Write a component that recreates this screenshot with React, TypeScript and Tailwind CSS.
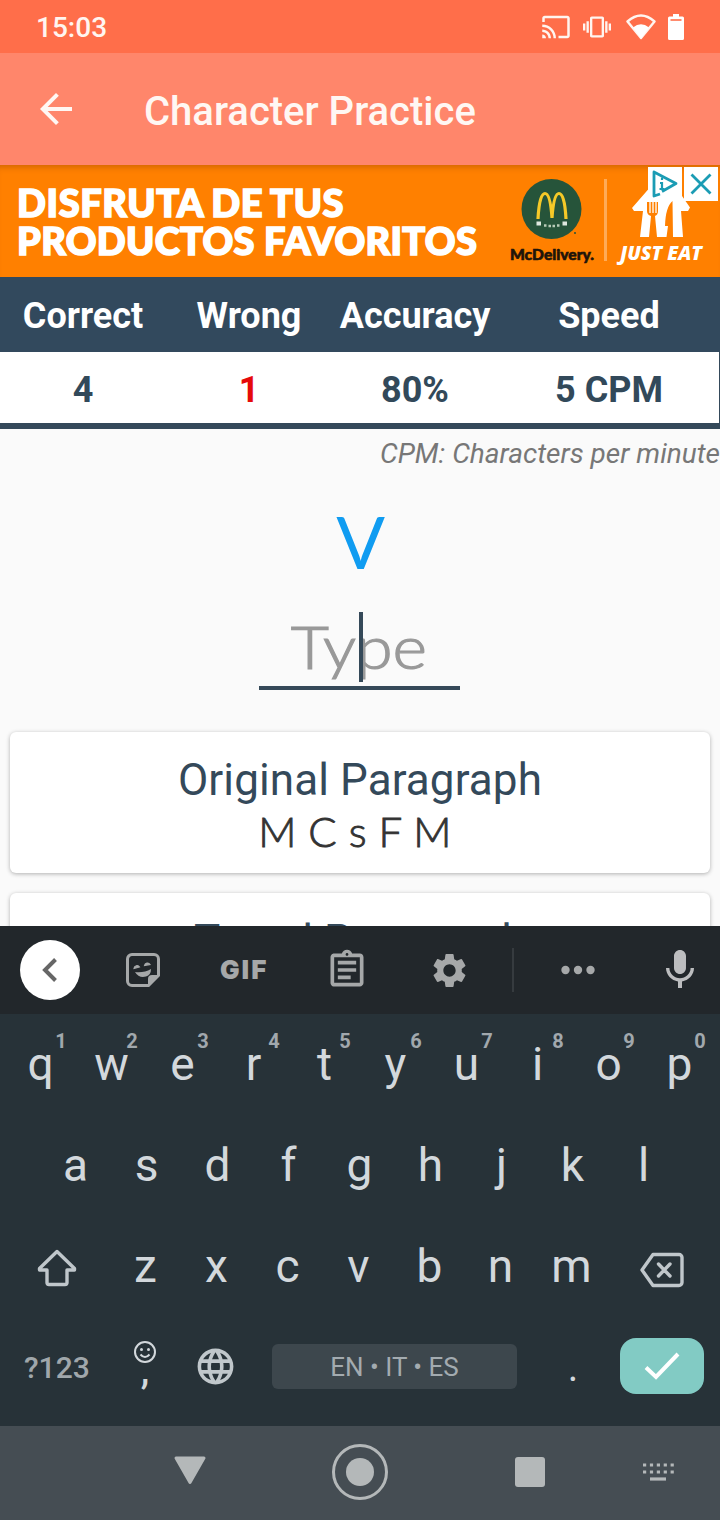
import type { ReactNode } from 'react';
import {
  MdArrowBack,
  MdCast,
  MdLanguage,
  MdMic,
  MdOutlineAssignment,
  MdSettings,
  MdVibration,
} from 'react-icons/md';

const TOP_ROW = ['q', 'w', 'e', 'r', 't', 'y', 'u', 'i', 'o', 'p'];
const HOME_ROW = ['a', 's', 'd', 'f', 'g', 'h', 'j', 'k', 'l'];
const BOTTOM_ROW = ['z', 'x', 'c', 'v', 'b', 'n', 'm'];

function StatusBar() {
  return (
    <div className="flex h-[53px] shrink-0 items-center bg-[#ff6e4a] pl-9 pr-9 text-[#fff5f0]">
      <span className="flex-1 pt-0.5 text-[28px] font-medium leading-none">15:03</span>
      <MdCast className="mr-3 size-[30px]" />
      <MdVibration className="mr-[15px] size-7" />
      <svg className="mr-[12px] h-[26px] w-[30px]" viewBox="0 0 30 26">
        <path d="M1.500 7.500Q15-4.500 28.500 7.500L15 24Z" fill="none" stroke="currentColor" strokeWidth="2.400" strokeLinejoin="round" />
        <path d="M7 13.500Q15 7 23 13.500L15 24.500Z" fill="#fff" />
      </svg>
      <svg className="h-[26px] w-4" viewBox="0 0 16 26">
        <path d="M5 0h6v2.500h3.500A1.500 1.500 0 0 1 16 4v20.500a1.500 1.500 0 0 1-1.500 1.500h-13A1.500 1.500 0 0 1 0 24.500V4a1.500 1.500 0 0 1 1.500-1.500H5z" fill="#fff" />
        <path d="M2.500 6h11" stroke="#ff6e4a" strokeWidth="1.600" />
      </svg>
    </div>
  );
}

function AppBar() {
  return (
    <div className="flex h-28 shrink-0 items-center bg-[#ff866b] pl-8 text-[#fff7f3]">
      <MdArrowBack className="size-12" />
      <h1 className="ml-16 mt-1.5 text-[40px] font-medium leading-none">Character Practice</h1>
    </div>
  );
}

function AdBanner() {
  return (
    <div className="relative flex h-28 shrink-0 overflow-hidden bg-[#ff8000] shadow-[inset_0_7px_6px_-5px_rgba(120,50,0,0.35)]">
      <div className="w-[490px] whitespace-nowrap pl-[17px] pt-[18px] font-[Lato] text-[38px] font-black leading-[38px] text-white [-webkit-text-stroke:1.6px_white]">
        <div className="tracking-[0.6px] [word-spacing:-1.5px]">DISFRUTA DE TUS</div>
        <div className="tracking-[0.3px]">PRODUCTOS FAVORITOS</div>
      </div>
      <svg className="h-28 w-[230px]" viewBox="0 0 230 112">
        <circle cx="61.500" cy="44" r="30" fill="#26543a" />
        <path d="M48 54C49 34 52 28.500 55 28.500C59 28.500 61 39 62 53C63 39 65 28.500 69 28.500C72 28.500 75 34 76 54" fill="none" stroke="#f5c928" strokeWidth="3.200" />
        <path d="M46.500 58.500h4.500M72.500 58.500h4.500" stroke="#dfe8df" strokeWidth="4" />
        <path d="M54 60.500h2.500M58.500 61h2.500M62.500 61h2.500M67 60.500h2.500" stroke="#b8cbb8" strokeWidth="2.400" />
        <circle cx="85" cy="68" r="1" fill="#26543a" />
        <text x="20" y="95" textLength="84" lengthAdjust="spacingAndGlyphs" fontFamily="Lato" fontSize="15.500" fontWeight="900" fill="#20140a" stroke="#20140a" strokeWidth="0.600">McDelivery.</text>
        <path d="M115.500 14v82" stroke="#ffab57" strokeWidth="3" />
        <path d="M142 43L169 12L183 18L200 42.500L198 46H191L193 72H150L153 46H144Z" fill="#fff" />
        <path d="M157 37h11v9q0 4-3 5l2 21h-8l2-21q-4-1-4-5z" fill="#ff8000" />
        <path d="M160 37v11M163 37v11M166 37v11" stroke="#fff" strokeWidth="1.300" />
        <path d="M182.500 36q-7 6-7.500 25h3l-1.500 11h6.500z" fill="#ff8000" />
        <text x="130" y="95" textLength="82" lengthAdjust="spacingAndGlyphs" fontFamily="Open Sans" fontSize="20" fontWeight="800" fontStyle="italic" fill="#fff">JUST EAT</text>
      </svg>
      <div className="absolute right-0.5 top-0.5 flex gap-0.5 text-[#1b9cb4]">
        <svg className="size-[34px] bg-white" viewBox="0 0 34 34" fill="none" stroke="currentColor">
          <path d="M12 27L6 29V5L28 16.500L14 24.500" strokeWidth="2.800" strokeLinejoin="round" />
          <path d="M14 10.500v2.500M14 15v7M11.500 22h5M12 16h2" strokeWidth="2.200" />
        </svg>
        <svg className="size-[34px] bg-white" viewBox="0 0 34 34" fill="none" stroke="currentColor">
          <path d="M7.500 7.500l19 19M26.500 7.500l-19 19" strokeWidth="2.800" />
        </svg>
      </div>
    </div>
  );
}

function ScoreTable() {
  return (
    <div className="shrink-0 border-b-[6px] border-[#34495a] text-center text-4xl font-bold">
      <div className="grid h-[75px] grid-cols-[166px_166px_166px_222px] items-center bg-[#32495d] pt-0.5 text-white">
        <span>Correct</span>
        <span>Wrong</span>
        <span>Accuracy</span>
        <span>Speed</span>
      </div>
      <div className="grid h-[71px] grid-cols-[166px_166px_166px_222px] items-center border-r border-[#34495a] bg-white pt-[5px] text-[#32495a]">
        <span>4</span>
        <span className="text-[#e60a0a]">1</span>
        <span>80%</span>
        <span>5 CPM</span>
      </div>
    </div>
  );
}

function ParagraphCard({ title, children }: { title: string; children?: ReactNode }) {
  return (
    <div className="mx-2.5 h-[141px] rounded-md bg-white pt-[22px] text-center shadow-[0_1px_4px_rgba(0,0,0,0.3)]">
      <h2 className="text-[44px] leading-[52px] tracking-[0.1px] text-[#34495a]">{title}</h2>
      <p className="pr-2.5 font-[Lato] text-[42px] font-light leading-[50px] tracking-[0.3px] text-[#333] [-webkit-text-stroke:0.9px_#333]">{children}</p>
    </div>
  );
}

function Key({ label, hint }: { label: string; hint?: string }) {
  return (
    <div className="relative w-[71px] text-center text-[46px] leading-[101px]">
      {label}
      {hint && (
        <span className="absolute left-[46px] top-[17px] w-5 text-xl font-bold leading-5 text-[#a1a8ad]">{hint}</span>
      )}
    </div>
  );
}

function Toolbar() {
  return (
    <div className="flex h-[88px] shrink-0 items-center bg-[#22272b] text-[#a6a8a9]">
      <div className="ml-5 flex size-[60px] items-center justify-center rounded-full bg-white">
        <svg className="size-8" viewBox="0 0 32 32">
          <path d="M21.500 5.500L11 16l10.500 10.500" fill="none" stroke="#666" strokeWidth="4" />
        </svg>
      </div>
      <svg className="ml-[46px] size-[34px]" viewBox="0 0 34 34" fill="none" stroke="currentColor">
        <path d="M6 1.500h22a4.500 4.500 0 0 1 4.500 4.500v16.500l-10 10H6A4.500 4.500 0 0 1 1.500 28V6A4.500 4.500 0 0 1 6 1.500z" strokeWidth="3" />
        <path d="M22 32v-6a4 4 0 0 1 4-4h6z" fill="currentColor" stroke="none" />
        <path d="M9 19q9 1 16-3q0 6-5 7.500q-7 2-11-4.500z" fill="currentColor" stroke="none" />
        <path d="M8 15.500a3 3 0 0 1 5.500-1.500zM18.500 12.500a3 3 0 0 1 5.500-1z" fill="currentColor" strokeWidth="1.200" />
      </svg>
      <span className="ml-[60px] w-[50px] font-[Inter] text-[26px] font-black leading-none tracking-[2px]">GIF</span>
      <MdOutlineAssignment className="ml-[55px] size-11" />
      <MdSettings className="ml-[60px] size-[41px]" />
      <div className="ml-[42px] h-11 w-[2px] bg-[#363b3f]" />
      <svg className="ml-[47px] h-3 w-[34px]" viewBox="0 0 34 12" fill="currentColor">
        <circle cx="4.500" cy="6" r="4.200" />
        <circle cx="17" cy="6" r="4.200" />
        <circle cx="29.500" cy="6" r="4.200" />
      </svg>
      <MdMic className="ml-[61px] size-12 text-[#bcbdbf]" />
    </div>
  );
}

function Keyboard() {
  return (
    <div className="h-[412px] shrink-0 bg-[#273238] text-[#d3d8dc]">
      <div className="flex justify-center">
        {TOP_ROW.map((k, i) => (
          <Key key={k} label={k} hint={String((i + 1) % 10)} />
        ))}
      </div>
      <div className="flex justify-center pr-px">
        {HOME_ROW.map((k) => (
          <Key key={k} label={k} />
        ))}
      </div>
      <div className="flex items-center">
        <svg className="ml-[37px] mr-[33px] h-10 w-10 text-[#c0c7cb]" viewBox="0 0 40 40" fill="none" stroke="currentColor">
          <path d="M20 4.500L2.500 21.500v1.500h7.500v12.500a2 2 0 0 0 2 2h16a2 2 0 0 0 2-2V23h7.500v-1.500z" strokeWidth="3.400" strokeLinejoin="round" />
        </svg>
        {BOTTOM_ROW.map((k) => (
          <Key key={k} label={k} />
        ))}
        <svg className="ml-[33px] mt-1.5 h-9 w-11 text-[#c0c7cb]" viewBox="0 0 44 36" fill="none" stroke="currentColor">
          <path d="M13 2.500h26a3 3 0 0 1 3 3v25a3 3 0 0 1-3 3H13L2 18z" strokeWidth="3.400" strokeLinejoin="round" />
          <path d="M18.500 12l11.500 12M30 12L18.500 24" strokeWidth="3.400" strokeLinecap="round" />
        </svg>
      </div>
      <div className="flex h-[98px] items-center">
        <span className="ml-6 w-[68px] pt-0.5 text-[30px] font-medium text-[#a0a7ab]">?123</span>
        <div className="ml-10 flex w-[26px] flex-col items-center pb-3">
          <svg className="size-[26px]" viewBox="0 0 26 26" fill="none" stroke="currentColor">
            <circle cx="13" cy="13" r="10" strokeWidth="2" />
            <path d="M8.500 15.500q4.500 5 9 0" strokeWidth="2" />
            <circle cx="9.500" cy="10.500" r="1.500" fill="currentColor" stroke="none" />
            <circle cx="16.500" cy="10.500" r="1.500" fill="currentColor" stroke="none" />
          </svg>
          <span className="h-4 text-[38px] font-medium leading-[10px]">,</span>
        </div>
        <MdLanguage className="ml-9 size-[43px] text-[#c0c7cb]" />
        <div className="ml-[35px] flex h-[45px] w-[245px] items-center justify-center rounded-md bg-[#3d474d] pt-0.5 text-[26px] text-[#a3abb0]">
          EN • IT • ES
        </div>
        <span className="ml-[50px] w-3 pt-1 text-center text-[40px]">.</span>
        <div className="ml-[41px] flex h-14 w-[84px] items-center justify-center rounded-[16px] bg-[#82cbc4]">
          <svg className="h-7 w-9" viewBox="0 0 36 28">
            <path d="M2 15.500l10 9.500L34 2" fill="none" stroke="#fff" strokeWidth="4" />
          </svg>
        </div>
      </div>
    </div>
  );
}

function NavBar() {
  return (
    <div className="flex h-[94px] shrink-0 items-center bg-[#454d53] pb-0.5 text-[#b4b8b9]">
      <svg className="mb-1 ml-[173px] h-[30px] w-[34px]" viewBox="0 0 34 30">
        <path d="M3 3h28L17 27.500z" fill="currentColor" stroke="currentColor" strokeWidth="3" strokeLinejoin="round" />
      </svg>
      <div className="ml-[125px] flex size-14 items-center justify-center rounded-full border-[3px] border-current">
        <div className="size-7 rounded-full bg-current" />
      </div>
      <div className="ml-[127px] size-[30px] rounded-[3px] bg-current" />
      <svg className="ml-[97px] h-5 w-8" viewBox="0 0 32 20" stroke="currentColor" strokeWidth="3.200">
        <path d="M1 3h31M1 10h31" strokeDasharray="3.200 3.700" />
        <path d="M8 17h16" />
      </svg>
    </div>
  );
}

export default function App() {
  return (
    <div className="flex h-[1520px] w-[720px] flex-col overflow-hidden bg-[#fafafa] font-[Roboto,sans-serif]">
      <StatusBar />
      <AppBar />
      <AdBanner />
      <ScoreTable />
      <main className="flex min-h-0 flex-1 flex-col overflow-hidden">
        <p className="whitespace-nowrap pt-[9px] text-right text-[28px] italic leading-8 text-[#777]">CPM: Characters per minute</p>
        <div className="mt-7 pl-px text-center font-[Lato] text-[72px] leading-[86px] text-[#109cf1]">V</div>
        <div className="relative mx-auto mt-7 h-[78px] w-[201px] shrink-0 -translate-x-px border-b-4 border-[#354959] text-center font-[Lato] text-[60px] font-light leading-[68px] text-[#999] [-webkit-text-stroke:1.2px_#999]">
          <span className="inline-block scale-x-110">Type</span>
          <span className="absolute left-[100px] top-0 h-[70px] w-1 bg-[#354959]" />
        </div>
        <div className="mt-[42px] flex flex-col gap-5">
          <ParagraphCard title="Original Paragraph">M C s F M</ParagraphCard>
          <ParagraphCard title="Typed Paragraph" />
        </div>
      </main>
      <Toolbar />
      <Keyboard />
      <NavBar />
    </div>
  );
}
